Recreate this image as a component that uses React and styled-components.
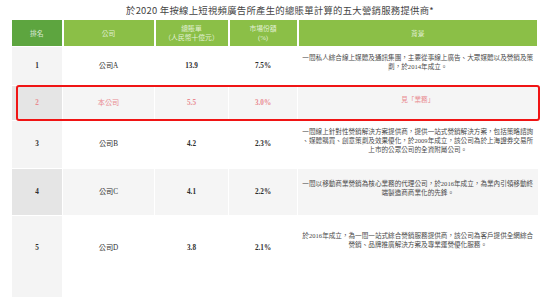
import styled, { createGlobalStyle } from 'styled-components';

const GlobalStyle = createGlobalStyle`
  body {
    margin: 0;
    background: #ffffff;
    font-family: "Liberation Serif", "Noto Sans CJK TC", serif;
  }
`;

const Page = styled.div`
  width: 550px;
  height: 307px;
  overflow: hidden;
`;

const Title = styled.h1`
  margin: 0;
  height: 19px;
  line-height: 20px;
  text-align: center;
  font-family: "Noto Sans CJK TC", sans-serif;
  font-weight: 400;
  font-size: 9.4px;
  letter-spacing: 0.25px;
  color: #444444;
  padding-left: 10px;
`;

const TableWrap = styled.div`
  position: relative;
  margin-left: 11px;
  width: 528px;
`;

const Table = styled.table`
  width: 100%;
  table-layout: fixed;
  border-collapse: collapse;

  th,
  td {
    border: 1px solid #ffffff;
    padding: 0;
    text-align: center;
  }
`;

const HeadCell = styled.th`
  height: 26px;
  background-color: ${(p) => (p.$rank ? '#5da53f' : '#8bbf47')};
  color: rgba(255, 255, 255, 0.78);
  font-weight: 400;
  font-size: 6.8px;
  line-height: 9px;
  border-right-width: 2px !important;
`;

const Row = styled.tr`
  height: ${(p) => p.$h}px;
  color: ${(p) => (p.$own ? '#e98a90' : '#2e2e2e')};
`;

const Cell = styled.td`
  background-color: ${(p) => (p.$shade ? '#f5f5f5' : '#ffffff')};
  font-size: 7.2px;
  line-height: 9px;
  font-weight: ${(p) => (p.$num ? 600 : 400)};
  vertical-align: ${(p) => (p.$top ? 'top' : 'middle')};
  padding-top: ${(p) => p.$top || 0}px !important;
`;

const RankCell = styled(Cell)`
  background-color: ${(p) => (p.$shade ? '#e5e5e5' : '#f4f4f4')};
`;

const BgCell = styled(Cell)`
  font-size: 6.6px;
  font-weight: 400;
  line-height: 8.8px;
  padding-bottom: ${(p) => (p.$top ? 0 : 6)}px !important;
  color: ${(p) => (p.$own ? '#e98a90' : '#4a4a4a')};
`;

const Highlight = styled.div`
  position: absolute;
  top: 66px;
  left: 5px;
  width: 520px;
  height: 32px;
  border: 2px solid #f01414;
  border-radius: 3px;
  pointer-events: none;
`;

const rows = [
  {
    rank: '1',
    name: '公司A',
    bill: '13.9',
    share: '7.5%',
    h: 39,
    bg: ['一間私人綜合線上媒體及通訊集團，主要從事線上廣告、大眾媒體以及營銷及策', '劃，於2014年成立。'],
  },
  { rank: '2', name: '本公司', bill: '5.5', share: '3.0%', h: 35, own: true, shade: true, bg: ['見「業務」'] },
  {
    rank: '3',
    name: '公司B',
    bill: '4.2',
    share: '2.3%',
    h: 48,
    bg: [
      '一間線上針對性營銷解決方案提供商，提供一站式營銷解決方案，包括策略諮詢',
      '、媒體購買、創意策劃及效果優化，於2009年成立，該公司為於上海證券交易所',
      '上市的公眾公司的全資附屬公司。',
    ],
  },
  {
    rank: '4',
    name: '公司C',
    bill: '4.1',
    share: '2.2%',
    h: 47,
    shade: true,
    bg: ['一間以移動商業營銷為核心業務的代理公司，於2016年成立，為業內引領移動終', '端製造商商業化的先鋒。'],
  },
  {
    rank: '5',
    name: '公司D',
    bill: '3.8',
    share: '2.1%',
    h: 82,
    top: 28,
    bgTop: 16,
    bg: ['於2016年成立，為一間一站式綜合營銷服務提供商，該公司為客戶提供全網綜合', '營銷、品牌推廣解決方案及專業運營優化服務。'],
  },
];

const App = () => {
  return (
    <Page>
      <GlobalStyle />
      <Title>於2020 年按線上短視頻廣告所產生的總賬單計算的五大營銷服務提供商*</Title>
      <TableWrap>
        <Table>
          <colgroup>
            <col style={{ width: 51 }} />
            <col style={{ width: 92 }} />
            <col style={{ width: 74 }} />
            <col style={{ width: 69 }} />
            <col />
          </colgroup>
          <thead>
            <tr>
              <HeadCell $rank>排名</HeadCell>
              <HeadCell>公司</HeadCell>
              <HeadCell>
                總賬單
                <br />
                （人民幣十億元）
              </HeadCell>
              <HeadCell>
                市場份額
                <br />
                (%)
              </HeadCell>
              <HeadCell>背景</HeadCell>
            </tr>
          </thead>
          <tbody>
            {rows.map((r) => (
              <Row key={r.rank} $h={r.h} $own={r.own}>
                <RankCell $num $shade={r.shade} $top={r.top}>{r.rank}</RankCell>
                <Cell $shade={r.shade} $top={r.top}>{r.name}</Cell>
                <Cell $num $shade={r.shade} $top={r.top}>{r.bill}</Cell>
                <Cell $num $shade={r.shade} $top={r.top}>{r.share}</Cell>
                <BgCell $shade={r.shade} $top={r.bgTop} $own={r.own}>
                  {r.bg.map((line, i) => (
                    <span key={i}>
                      {i > 0 && <br />}
                      {line}
                    </span>
                  ))}
                </BgCell>
              </Row>
            ))}
          </tbody>
        </Table>
        <Highlight />
      </TableWrap>
    </Page>
  );
};

export default App;
